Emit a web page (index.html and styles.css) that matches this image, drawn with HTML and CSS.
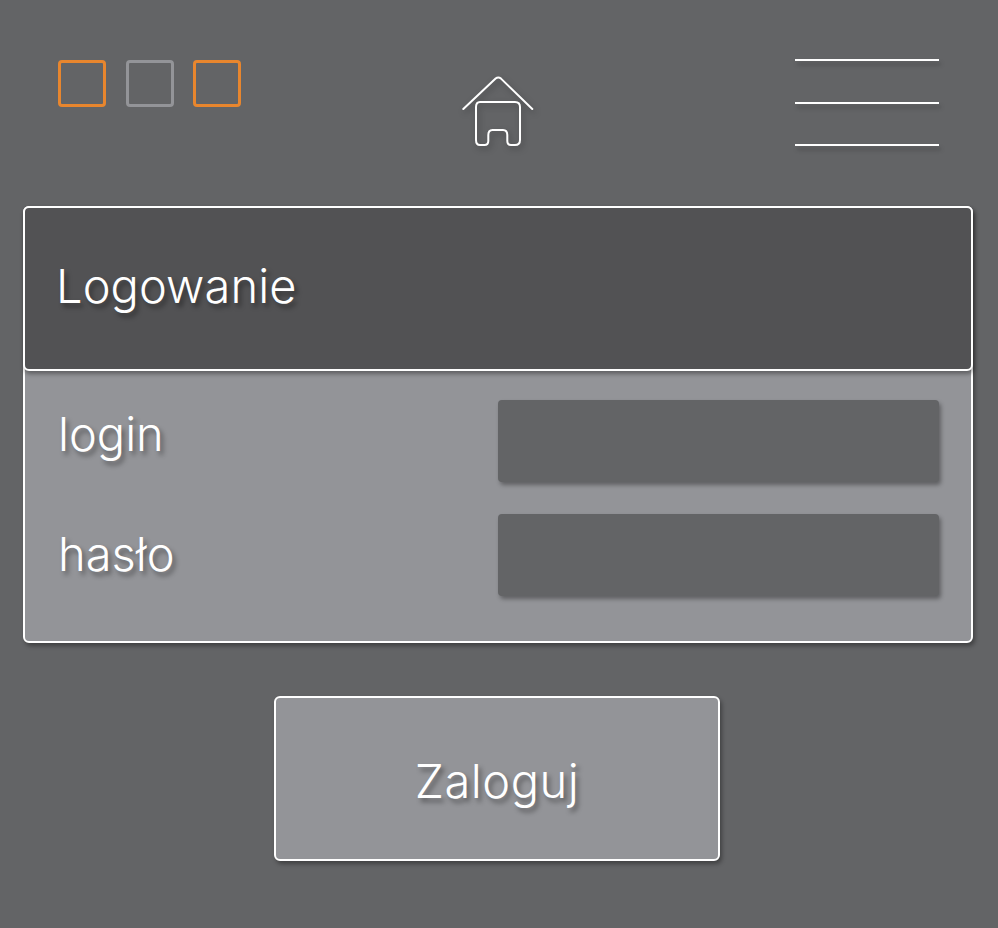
FILE: index.html
```html
<!DOCTYPE html>
<html lang="pl">
<head>
    <meta charset="UTF-8">
    <meta name="viewport" content="width=device-width, initial-scale=1.0">
    <title>Logowanie</title>
    <link rel="stylesheet" href="styles.css">
</head>
<body>

<header class="topbar">
    <div class="squares">
        <span class="square"></span>
        <span class="square square-grey"></span>
        <span class="square"></span>
    </div>
    <a href="#" class="home" aria-label="Strona główna">
        <svg width="72" height="72" viewBox="0 0 72 72" fill="none" stroke="#fff" stroke-width="2" stroke-linecap="round" stroke-linejoin="round">
            <path d="M1.3 33 L33.6 2.6 Q36.3 0.3 39 2.6 L70.3 33"/>
            <path d="M18 26 H53 Q58 26 58 31 V64 Q58 69 53 69 H49 Q45.3 69 45.3 65 V59 Q45.3 54 41 54 H30.5 Q26.3 54 26.3 59 V65 Q26.3 69 22.5 69 H18 Q14 69 14 64 V31 Q14 26 18 26 Z"/>
        </svg>
    </a>
    <button class="burger" aria-label="Menu">
        <span></span>
        <span></span>
        <span></span>
    </button>
</header>

<main class="panel">
    <h1 class="panel-title">Logowanie</h1>
    <form class="panel-body">
        <div class="row">
            <label for="login" class="label-login">login</label>
            <input id="login" type="text">
        </div>
        <div class="row">
            <label for="haslo">hasło</label>
            <input id="haslo" type="password">
        </div>
    </form>
</main>

<div class="actions">
    <button class="submit">Zaloguj</button>
</div>

</body>
</html>
```

FILE: styles.css
```css
body {
    margin: 0;
    height: 928px;
    overflow: hidden;
    background-color: #636466;
    color: #fff;
    font-family: Inter, "Liberation Sans", sans-serif;
    font-weight: 300;
}
.topbar {
    display: flex;
    justify-content: space-between;
    align-items: flex-start;
    height: 206px;
    box-sizing: border-box;
    padding: 60px 59px 0 58px;
}
.squares {
    display: flex;
    gap: 19.5px;
}
.square {
    display: block;
    width: 48px;
    height: 47px;
    box-sizing: border-box;
    border: 3px solid #e8862e;
    border-radius: 4px;
}
.square-grey {
    border-color: #939498;
}
.home {
    display: block;
    margin: 16px 40px 0 0;
    filter: drop-shadow(2px 3px 3px rgba(0, 0, 0, 0.3));
}
.home svg {
    display: block;
}
.burger {
    display: flex;
    flex-direction: column;
    gap: 40.6px;
    width: 144px;
    margin-top: -1px;
    padding: 0;
    background: none;
    border: 0;
}
.burger span {
    display: block;
    width: 100%;
    height: 2px;
    background: #fff;
    box-shadow: 2px 4px 4px rgba(0, 0, 0, 0.25);
}
.panel {
    margin: 0 25px 0 23px;
    height: 437px;
    box-sizing: border-box;
    background: #939498;
    border: 2px solid #fff;
    border-radius: 6px;
    box-shadow: 2px 3px 4px rgba(0, 0, 0, 0.35);
}
.panel-title {
    height: 165px;
    box-sizing: border-box;
    margin: -2px -2px 0;
    padding: 0 0 6px 31px;
    display: flex;
    align-items: center;
    background: #525254;
    border: 2px solid #fff;
    border-radius: 6px;
    box-shadow: 1px 3px 4px rgba(0, 0, 0, 0.35);
    font-size: 47px;
    font-weight: 300;
    letter-spacing: 0.1px;
    text-shadow: 3px 4px 5px rgba(0, 0, 0, 0.4);
}
.panel-body {
    display: flex;
    flex-direction: column;
    gap: 32px;
    padding: 29px 32px 0 33px;
}
.row {
    display: flex;
    justify-content: space-between;
    align-items: center;
}
.row label {
    margin-bottom: 4px;
    font-size: 47px;
    text-shadow: 3px 4px 5px rgba(0, 0, 0, 0.4);
}
.row .label-login {
    margin-bottom: 16px;
}
.row input {
    width: 441px;
    height: 82px;
    box-sizing: border-box;
    background: #636466;
    border: 0;
    border-radius: 4px;
    box-shadow: 2px 3px 4px rgba(0, 0, 0, 0.35);
}
.actions {
    display: flex;
    justify-content: center;
    padding: 53px 4px 0 0;
}
.submit {
    width: 446px;
    height: 165px;
    padding: 4px 0 0;
    background: #939498;
    color: #fff;
    border: 2px solid #fff;
    border-radius: 6px;
    box-shadow: 2px 3px 4px rgba(0, 0, 0, 0.35);
    font-family: inherit;
    font-weight: 300;
    font-size: 47px;
    letter-spacing: 0.5px;
    text-shadow: 3px 4px 5px rgba(0, 0, 0, 0.4);
}
```
